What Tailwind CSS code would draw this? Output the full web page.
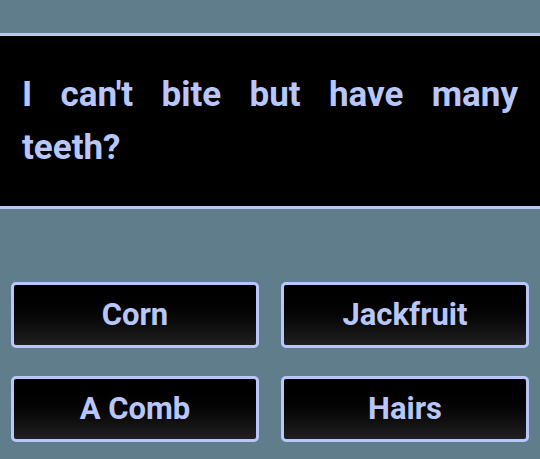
<!DOCTYPE html>
<html lang="en">
<head>
<meta charset="utf-8">
<meta name="viewport" content="width=device-width, initial-scale=1">
<title>Riddle Quiz</title>
<script src="https://cdn.jsdelivr.net/npm/@tailwindcss/browser@4"></script>
</head>
<body class="min-h-screen bg-[#607d8b] font-['Roboto',sans-serif] font-bold text-[#b9c6f9]">
<main class="pt-[33px]">
<h1 class="border-y-3 border-[#b9c6f9] bg-black px-[22px] py-8 text-justify text-[35px] leading-[53px] font-bold">I can't bite but have many teeth?</h1>
<div class="mt-[73px] grid grid-cols-2 gap-x-[22px] gap-y-7 px-[11px] text-[31px]">
<button type="button" class="h-[66px] rounded-[5px] border-3 border-[#b9c6f9] bg-linear-to-b from-black to-[#202020]">Corn</button>
<button type="button" class="h-[66px] rounded-[5px] border-3 border-[#b9c6f9] bg-linear-to-b from-black to-[#202020]">Jackfruit</button>
<button type="button" class="h-[66px] rounded-[5px] border-3 border-[#b9c6f9] bg-linear-to-b from-black to-[#202020]">A Comb</button>
<button type="button" class="h-[66px] rounded-[5px] border-3 border-[#b9c6f9] bg-linear-to-b from-black to-[#202020]">Hairs</button>
</div>
</main>
</body>
</html>
